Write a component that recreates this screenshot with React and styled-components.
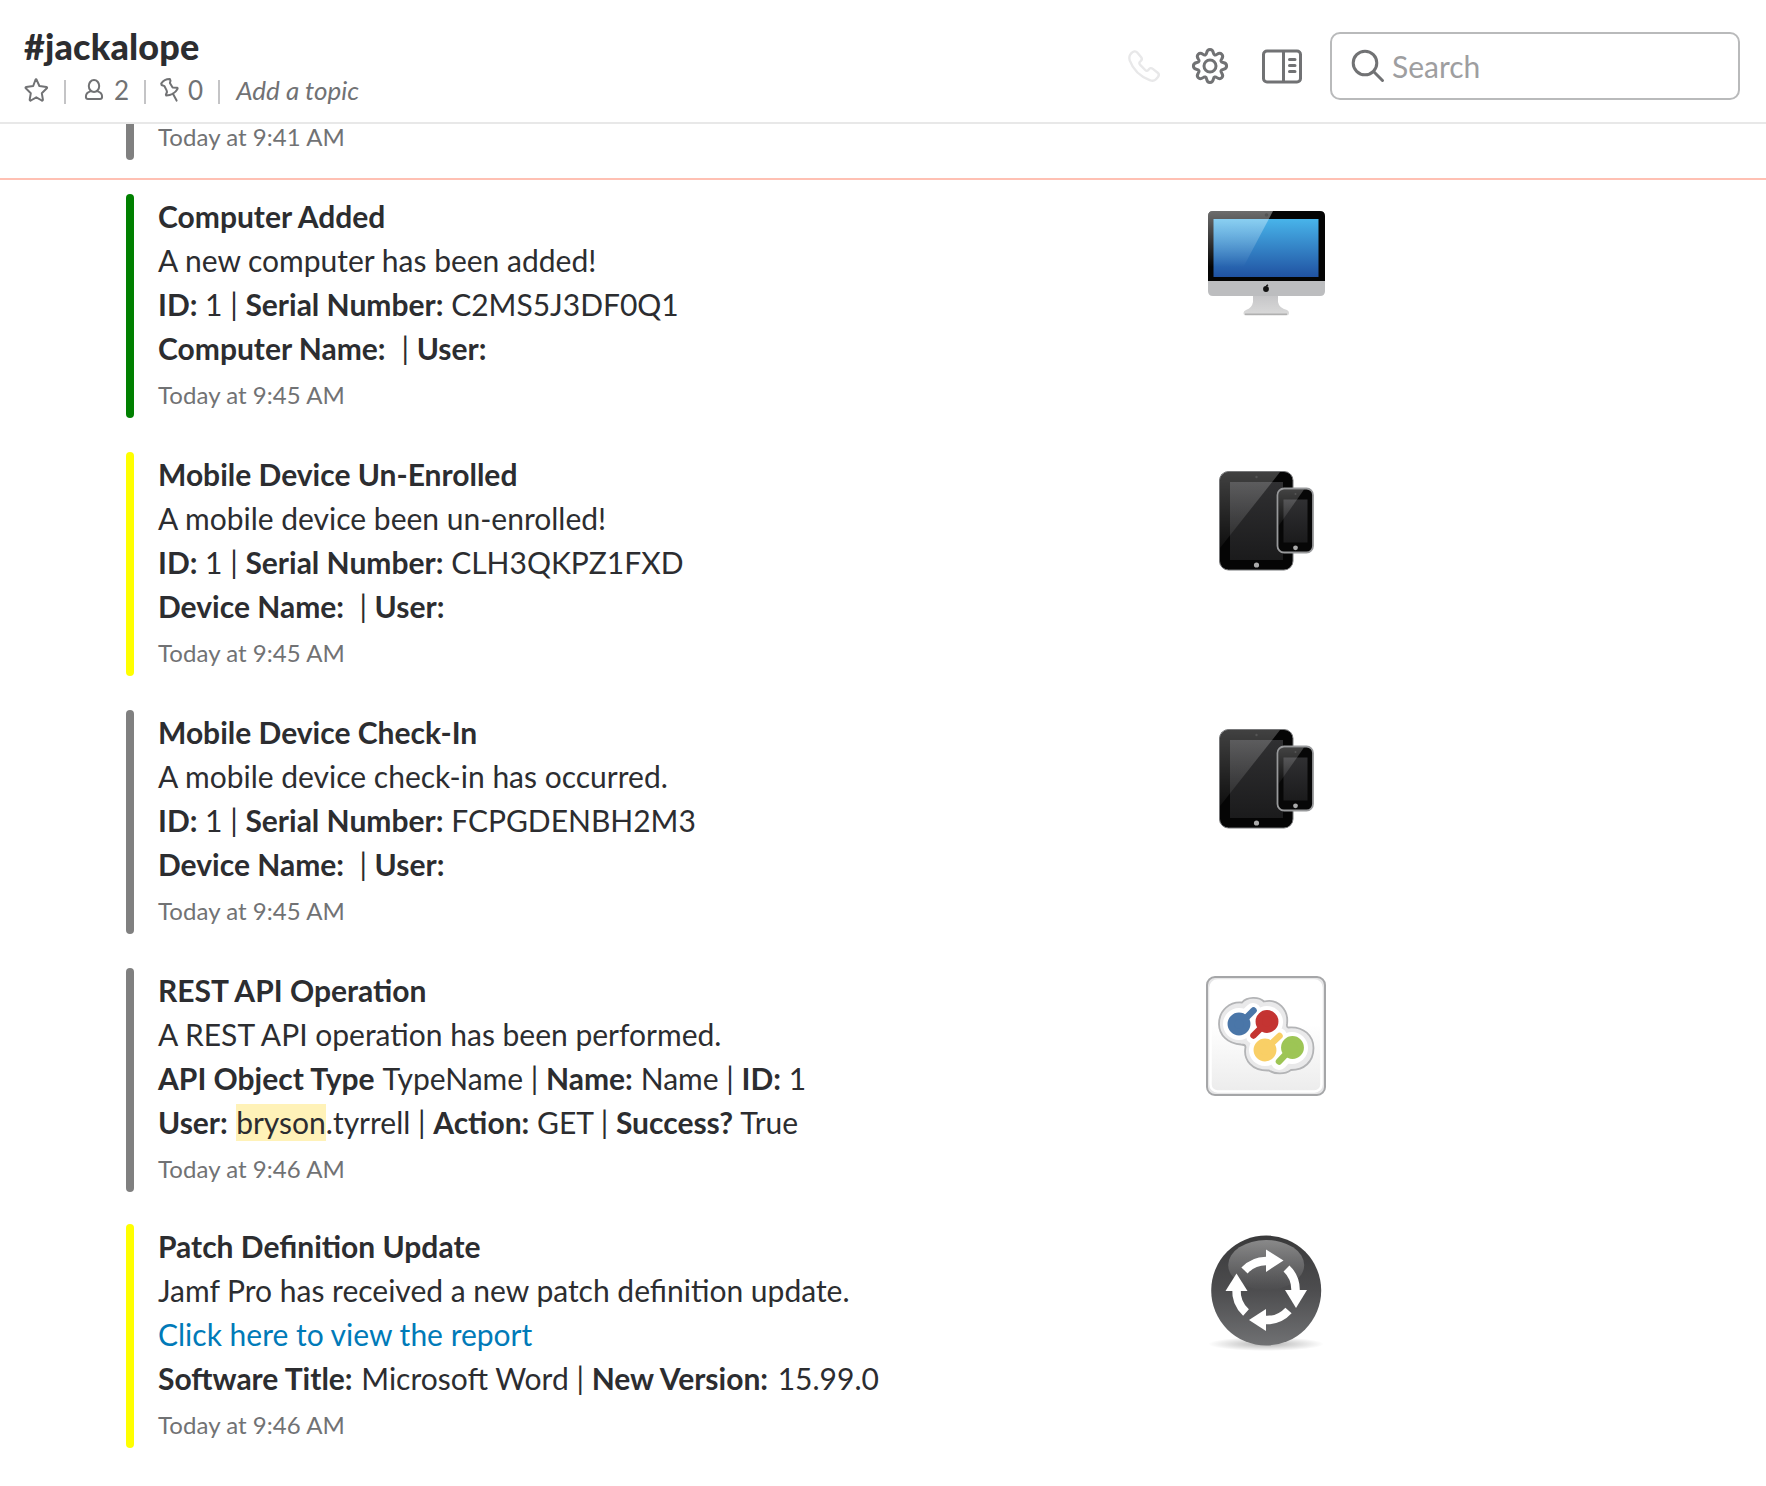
import React from "react";
import styled, { createGlobalStyle } from "styled-components";

const GlobalStyle = createGlobalStyle`
  * { box-sizing: border-box; }
  body { margin: 0; background: #fff; overflow: hidden; }
`;

const Page = styled.div`
  width: 100%;
  height: 1486px;
  overflow: hidden;
  display: flex;
  flex-direction: column;
  background: #fff;
  color: #2c2d30;
  font: 400 30px/44px Lato, sans-serif;
`;

const Header = styled.header`
  flex: none;
  height: 124px;
  display: flex;
  justify-content: space-between;
  padding: 0 26px 0 24px;
  border-bottom: 2px solid #e8e8e8;
`;

const ChannelInfo = styled.div`
  display: flex;
  flex-direction: column;
  padding-top: 24px;
`;

const ChannelName = styled.h1`
  margin: 0 0 2px;
  font-size: 36px;
  line-height: 44px;
  font-weight: 900;
  letter-spacing: 0.15px;
`;

const Meta = styled.div`
  display: flex;
  align-items: center;
  height: 40px;
  color: #717274;
  font-size: 26px;
  line-height: 40px;
`;

const Divider = styled.span`
  width: 2px;
  height: 24px;
  margin: 4px ${(p) => p.$right}px 0 ${(p) => p.$left}px;
  background: #c4c4c6;
`;

const MetaText = styled.span`
  margin-left: ${(p) => p.$left || 0}px;
  font-style: ${(p) => (p.$italic ? "italic" : "normal")};
`;

const Icon = styled.svg`
  display: block;
  flex: none;
  overflow: visible;
  fill: none;
  stroke: ${(p) => p.$color || "#717274"};
  stroke-width: ${(p) => p.$weight || 2}px;
  stroke-linecap: round;
  stroke-linejoin: round;
`;

const Tools = styled.div`
  display: flex;
  align-items: center;
  height: 132px;
`;

const Gap = styled.span`
  width: ${(p) => p.$w}px;
`;

const SearchBox = styled.label`
  display: flex;
  align-items: center;
  width: 410px;
  height: 68px;
  padding-left: 20px;
  border: 2px solid #b9babb;
  border-radius: 10px;
  color: #9e9ea0;
`;

const SearchText = styled.span`
  margin-left: 8px;
`;

const Feed = styled.main`
  flex: 1;
  min-height: 0;
  overflow: hidden;
`;

const Clipped = styled.div`
  display: flex;
  height: 36px;
  margin-left: 126px;
`;

const UnreadLine = styled.hr`
  height: 2px;
  margin: 18px 0 14px;
  border: 0;
  background: #ffc0b3;
`;

const Attachment = styled.article`
  display: flex;
  height: 224px;
  margin: 0 0 ${(p) => p.$after}px 126px;
`;

const Bar = styled.div`
  flex: none;
  width: 8px;
  border-radius: ${(p) => (p.$cut ? "0 0 4px 4px" : "4px")};
  background: ${(p) => p.$color};
`;

const Body = styled.div`
  flex: none;
  width: 1066px;
  padding-left: 24px;
  white-space: pre;
`;

const Line = styled.div`
  height: 44px;
`;

const Strong = styled.strong`
  margin-right: ${(p) => p.$gap || 0}px;
  font-weight: 700;
`;

const Stamp = styled.div`
  color: #717274;
  font-size: 24px;
  line-height: 28px;
  margin-top: ${(p) => p.$top}px;
  letter-spacing: 0.05px;
`;

const StampCut = styled(Stamp)`
  padding-left: 24px;
`;

const Mark = styled.mark`
  padding: 0 0 1px;
  color: inherit;
  background: #fff2b8;
`;

const Link = styled.a`
  color: #007ab8;
  text-decoration: none;
`;

const Thumb = styled.svg`
  display: block;
  flex: none;
  width: 132px;
  height: 160px;
`;

const StarIcon = () => (
  <Icon width="24" height="24" viewBox="0 0 24 24">
    <path d="M12.3 1.2 L15.4 8 L22.4 9 C23.2 9.2 23.3 9.8 22.8 10.3 L17.8 15.2 L18.9 21.7 C19 22.5 18.4 22.8 17.8 22.5 L12.3 19.3 L6.8 22.5 C6.2 22.8 5.6 22.5 5.7 21.7 L6.8 15.2 L1.8 10.3 C1.3 9.8 1.4 9.2 2.2 9 L9.2 8 L11.4 2 Q12 0.6 12.6 1.5" />
  </Icon>
);

const PersonIcon = () => (
  <Icon width="18" height="22" viewBox="0 0 18 22">
    <ellipse cx="9" cy="7" rx="5.2" ry="6" />
    <path d="M5.4 12.4 C2.2 13.2 .8 15.2 .9 18 Q1 20 3 20 H15 Q17 20 17.1 18 C17.2 15.2 15.8 13.2 12.6 12.4" />
  </Icon>
);

const PinIcon = () => (
  <Icon width="20" height="24" viewBox="0 0 20 24">
    <path d="M1.2 5.6 C3 3 6.500 1 9.900 1.100 L10.500 2.800 L9.900 5 L12.600 9.400 L17.200 9.800 Q18 10 17.300 11.200 C15.500 14.600 11 17.400 6.300 17.500 L5.900 16.700 L7 14 L6.600 12.400 L4.500 8.200 L1.600 7 Z M12.800 15.600 L16.600 22.600" />
  </Icon>
);

const PhoneIcon = () => (
  <Icon $color="#e8e8e9" $weight={2.4} width="32" height="32" viewBox="0 0 32 32">
    <path d="M3.400 3.200 C5.200 1.300 7.600 .6 9.200 2.500 L13.200 7.200 C14.300 8.600 14 9.900 12.600 11.100 C11.100 12.300 10.900 13.500 12.200 14.900 L17.200 20 C18.500 21.300 19.500 21.100 20.700 19.500 C21.900 17.900 23.300 17.700 24.800 18.900 L29.700 22.700 C31.200 24 31.100 25.500 30 26.900 L28.200 29.100 C26.800 30.800 24.500 31.200 21.700 30.100 C12.500 26.600 5 19.500 1.700 10.400 C.7 7.400 1.300 5.400 3.400 3.200 Z" />
  </Icon>
);

const GearIcon = () => (
  <Icon $weight={3} width="36" height="42" viewBox="-18 -21 36 42">
    <circle r="6" />
    <path d="M-3.4 -13 C-2.6 -17.8 2.6 -17.8 3.4 -13 C3.8 -10.8 5.4 -10.4 6.9 -11.6 C10.8 -14.4 14.4 -10.8 11.6 -6.9 C10.4 -5.4 10.8 -3.8 13 -3.4 C17.8 -2.6 17.8 2.6 13 3.4 C10.8 3.8 10.4 5.4 11.6 6.9 C14.4 10.8 10.8 14.4 6.9 11.6 C5.4 10.4 3.8 10.8 3.4 13 C2.6 17.8 -2.6 17.8 -3.4 13 C-3.8 10.8 -5.4 10.4 -6.9 11.6 C-10.8 14.4 -14.4 10.8 -11.6 6.9 C-10.4 5.4 -10.8 3.8 -13 3.4 C-17.8 2.6 -17.8 -2.6 -13 -3.4 C-10.8 -3.8 -10.4 -5.4 -11.6 -6.9 C-14.4 -10.8 -10.8 -14.4 -6.9 -11.6 C-5.4 -10.4 -3.8 -10.8 -3.4 -13 Z" />
  </Icon>
);

const PanelIcon = () => (
  <Icon $weight={3} width="40" height="34" viewBox="0 -.5 40 34">
    <rect x="1.5" y="1.5" width="37" height="31" rx="3.5" />
    <path d="M21.5 2 V32 M27.5 10 H33 M27.5 16 H33 M27.5 22 H33" />
  </Icon>
);

const SearchIcon = () => (
  <Icon $weight={3} width="32" height="32" viewBox="0 0 32 32">
    <circle cx="13" cy="13" r="11.8" />
    <path d="M21.8 21.8 L30.5 30.5" />
  </Icon>
);

const ComputerArt = () => (
  <Thumb viewBox="1200 194 132 160">
    <defs>
      <linearGradient id="screen" x1="0" y1="0" x2="0" y2="1">
        <stop offset="0" stopColor="#48b4ea" />
        <stop offset="1" stopColor="#2052a2" />
      </linearGradient>
      <linearGradient id="bezelShine" x1="0" y1="0" x2="0" y2="1">
        <stop offset="0" stopColor="#fff" stopOpacity=".42" />
        <stop offset=".8" stopColor="#fff" stopOpacity="0" />
      </linearGradient>
      <linearGradient id="stand" x1="0" y1="0" x2="0" y2="1">
        <stop offset="0" stopColor="#c5c5c7" />
        <stop offset="1" stopColor="#dadada" />
      </linearGradient>
    </defs>
    <path d="M1253 295 H1278 V302 Q1279 308 1287 310 Q1289 311 1289 313 Q1289 315.500 1286 315.500 H1246 Q1243.500 315.500 1243.500 313 Q1243.500 311 1246 310 Q1252 308 1253 302 Z" fill="url(#stand)" />
    <path d="M1245 314.300 H1287" stroke="#b0b0b0" strokeWidth="1.500" />
    <path d="M1208 280 H1325 V291 Q1325 296 1320 296 H1213 Q1208 296 1208 291 Z" fill="#bcbdbf" />
    <path d="M1208 281 V216 Q1208 211 1213 211 H1320 Q1325 211 1325 216 V281 Z" fill="#040404" />
    <rect x="1213.500" y="219" width="105" height="58" fill="url(#screen)" />
    <path d="M1208 281 V216 Q1208 211 1213 211 H1273 L1236 281 Z" fill="url(#bezelShine)" />
    <circle cx="1266.500" cy="215" r="1.800" fill="#555" />
    <circle cx="1266" cy="289" r="2.900" fill="#111" />
    <path d="M1266.200 286 L1268 284.800" stroke="#111" strokeWidth="1.500" />
  </Thumb>
);

const MobileArt = () => (
  <Thumb viewBox="1200 452 132 160">
    <defs>
      <linearGradient id="glass" x1="0" y1="0" x2="0" y2="1">
        <stop offset="0" stopColor="#303032" />
        <stop offset="1" stopColor="#1b1b1c" />
      </linearGradient>
      <linearGradient id="glare" x1="0" y1="0" x2="0" y2="1">
        <stop offset="0" stopColor="#fff" stopOpacity=".24" />
        <stop offset="1" stopColor="#fff" stopOpacity=".04" />
      </linearGradient>
    </defs>
    <rect x="1219.500" y="471.500" width="73.500" height="98.500" rx="9" fill="#050505" stroke="#77787a" strokeWidth="1" />
    <rect x="1230" y="482" width="53" height="78" fill="url(#glass)" />
    <path d="M1220 548 V481 Q1220 472 1229 472 H1280 Z" fill="url(#glare)" />
    <circle cx="1256.500" cy="477" r="1.200" fill="#555" />
    <circle cx="1256.500" cy="565" r="2.600" fill="#aaa" />
    <rect x="1277.500" y="488.500" width="35.500" height="64" rx="6.500" fill="#070707" stroke="#98999b" strokeWidth="1.800" />
    <rect x="1283.500" y="499.500" width="24" height="43" fill="url(#glass)" />
    <path d="M1278.500 526 V495 Q1279 489.500 1284 489.500 H1304 Z" fill="url(#glare)" />
    <circle cx="1295.500" cy="494" r="1" fill="#555" />
    <circle cx="1295.500" cy="547.800" r="2.400" fill="#aaa" />
  </Thumb>
);

const ApiArt = () => (
  <Thumb viewBox="1200 968 132 160">
    <defs>
      <linearGradient id="tile" x1="0" y1="0" x2="0" y2="1">
        <stop offset=".4" stopColor="#fff" />
        <stop offset="1" stopColor="#ececec" />
      </linearGradient>
    </defs>
    <rect x="1207" y="977" width="118" height="118" rx="8" fill="#e6e6e7" stroke="#a5a6a8" strokeWidth="2" />
    <rect x="1210.500" y="980.500" width="111" height="111" rx="7" fill="url(#tile)" stroke="#fff" strokeWidth="2.500" />
    <path
      d="M1241 1044.500 C1228 1044 1219 1035 1219 1024 C1219 1010 1230 1001.500 1242 1002.500 C1247 996.500 1259 996.500 1264 1001.500 C1278 998 1289 1010 1287 1024 Q1286.500 1027 1288 1027.500 C1304 1026 1313.500 1036 1313.500 1048 C1313.500 1062 1304 1070 1291 1070 C1285 1074.500 1275 1074.500 1269 1070.500 C1252 1071 1243 1060 1245.500 1047 Q1245.500 1044.500 1241 1044.500 Z"
      fill="#e9e9ea" stroke="#b3b4b6" strokeWidth="1.800"
    />
    <g stroke="#fff" strokeWidth="16" strokeLinecap="round">
      <path d="M1239 1024 L1253 1011 M1267 1021 L1254 1036 M1265 1049 L1279 1036 M1292 1048 L1279 1062" />
    </g>
    <g fill="#fff">
      <circle cx="1239" cy="1024" r="16" />
      <circle cx="1267" cy="1022" r="16" />
      <circle cx="1265" cy="1050" r="16" />
      <circle cx="1292" cy="1048" r="16" />
    </g>
    <g strokeWidth="6.500" strokeLinecap="round">
      <g fill="#4a76a8" stroke="#4a76a8">
        <path d="M1244 1020 L1253.500 1010.500" />
        <circle cx="1239" cy="1024" r="8.200" />
      </g>
      <g fill="#c43432" stroke="#c43432">
        <path d="M1263 1026 L1253.500 1035.500" />
        <circle cx="1267" cy="1021.500" r="8.200" />
      </g>
      <g fill="#f9cf66" stroke="#f9cf66">
        <path d="M1270 1045 L1279.500 1036" />
        <circle cx="1265" cy="1050" r="8.200" />
      </g>
      <g fill="#9dc555" stroke="#9dc555">
        <path d="M1288 1052 L1279 1061.500" />
        <circle cx="1292.500" cy="1047.500" r="8.200" />
      </g>
    </g>
  </Thumb>
);

const PatchArt = () => (
  <Thumb viewBox="1200 1224 132 160">
    <defs>
      <linearGradient id="disc" x1="0" y1="0" x2="0" y2="1">
        <stop offset="0" stopColor="#39393a" />
        <stop offset=".5" stopColor="#4d4d4f" />
        <stop offset="1" stopColor="#707173" />
      </linearGradient>
      <linearGradient id="gloss" x1="0" y1="0" x2="0" y2="1">
        <stop offset="0" stopColor="#fff" stopOpacity=".4" />
        <stop offset="1" stopColor="#fff" stopOpacity="0" />
      </linearGradient>
      <radialGradient id="shadow">
        <stop offset="0" stopColor="#000" stopOpacity=".3" />
        <stop offset="1" stopColor="#000" stopOpacity="0" />
      </radialGradient>
    </defs>
    <ellipse cx="1266" cy="1344" rx="58" ry="7" fill="url(#shadow)" />
    <circle cx="1266.200" cy="1290.500" r="55" fill="url(#disc)" />
    <ellipse cx="1266.200" cy="1265" rx="38" ry="25" fill="url(#gloss)" />
    <g fill="none" stroke="#fff" strokeWidth="8.500">
      <path d="M1244.500 1270.500 A29.500 29.500 0 0 1 1267 1261" />
      <path d="M1286.500 1268.500 A29.500 29.500 0 0 1 1295.500 1291" />
      <path d="M1288.500 1310.500 A29.500 29.500 0 0 1 1265 1320" />
      <path d="M1246 1312.500 A29.500 29.500 0 0 1 1236.500 1289" />
    </g>
    <g fill="#fff">
      <path d="M1266 1249.500 L1283.500 1260.500 L1266 1272 Z" />
      <path d="M1285 1290 H1307 L1296 1308 Z" />
      <path d="M1266 1309 V1331 L1249 1320 Z" />
      <path d="M1225.500 1291 H1247.500 L1236.500 1273.500 Z" />
    </g>
  </Thumb>
);

const B = Strong;

const messages = [
  {
    color: "#008000", after: 34, time: "Today at 9:45 AM", Art: ComputerArt, title: "Computer Added",
    lines: [
      "A new computer has been added!",
      <><B>ID:</B> 1 | <B>Serial Number:</B> C2MS5J3DF0Q1</>,
      <><B $gap={0.5}>Computer Name:</B>{"  | "}<B>User:</B></>,
    ],
  },
  {
    color: "#ffff00", after: 34, time: "Today at 9:45 AM", Art: MobileArt, title: "Mobile Device Un-Enrolled",
    lines: [
      "A mobile device been un-enrolled!",
      <><B>ID:</B> 1 | <B>Serial Number:</B> CLH3QKPZ1FXD</>,
      <><B>Device Name:</B>{"  | "}<B>User:</B></>,
    ],
  },
  {
    color: "#808080", after: 34, time: "Today at 9:45 AM", Art: MobileArt, title: "Mobile Device Check-In",
    lines: [
      "A mobile device check-in has occurred.",
      <><B>ID:</B> 1 | <B>Serial Number:</B> FCPGDENBH2M3</>,
      <><B>Device Name:</B>{"  | "}<B>User:</B></>,
    ],
  },
  {
    color: "#808080", after: 32, time: "Today at 9:46 AM", Art: ApiArt, title: "REST API Operation",
    lines: [
      "A REST API operation has been performed.",
      <><B $gap={1}>API Object Type</B> TypeName | <B $gap={0.3}>Name:</B> Name | <B>ID:</B> 1</>,
      <><B $gap={0.7}>User:</B> <Mark>bryson</Mark>.tyrrell | <B>Action:</B> GET | <B $gap={0.4}>Success?</B> True</>,
    ],
  },
  {
    color: "#ffff00", after: 0, time: "Today at 9:46 AM", Art: PatchArt, title: "Patch Definition Update",
    lines: [
      "Jamf Pro has received a new patch definition update.",
      <Link>Click here to view the report</Link>,
      <><B $gap={1}>Software Title:</B> Microsoft Word | <B $gap={2}>New Version:</B> 15.99.0</>,
    ],
  },
];

export default function App() {
  return (
    <Page>
      <GlobalStyle />
      <Header>
        <ChannelInfo>
          <ChannelName>#jackalope</ChannelName>
          <Meta>
            <StarIcon />
            <Divider $left={16} $right={19} />
            <PersonIcon />
            <MetaText $left={11}>2</MetaText>
            <Divider $left={15} $right={14} />
            <PinIcon />
            <MetaText $left={8}>0</MetaText>
            <Divider $left={15} $right={16} />
            <MetaText $italic>Add a topic</MetaText>
          </Meta>
        </ChannelInfo>
        <Tools>
          <PhoneIcon />
          <Gap $w={32} />
          <GearIcon />
          <Gap $w={34} />
          <PanelIcon />
          <Gap $w={28} />
          <SearchBox>
            <SearchIcon />
            <SearchText>Search</SearchText>
          </SearchBox>
        </Tools>
      </Header>
      <Feed>
        <Clipped>
          <Bar $color="#808080" $cut />
          <StampCut $top={-1}>Today at 9:41 AM</StampCut>
        </Clipped>
        <UnreadLine />
        {messages.map(({ color, after, time, Art, title, lines }) => (
          <Attachment key={title} $after={after}>
            <Bar $color={color} />
            <Body>
              <Line><Strong>{title}</Strong></Line>
              {lines.map((line, i) => (
                <Line key={i}>{line}</Line>
              ))}
              <Stamp $top={11}>{time}</Stamp>
            </Body>
            <Art />
          </Attachment>
        ))}
      </Feed>
    </Page>
  );
}
